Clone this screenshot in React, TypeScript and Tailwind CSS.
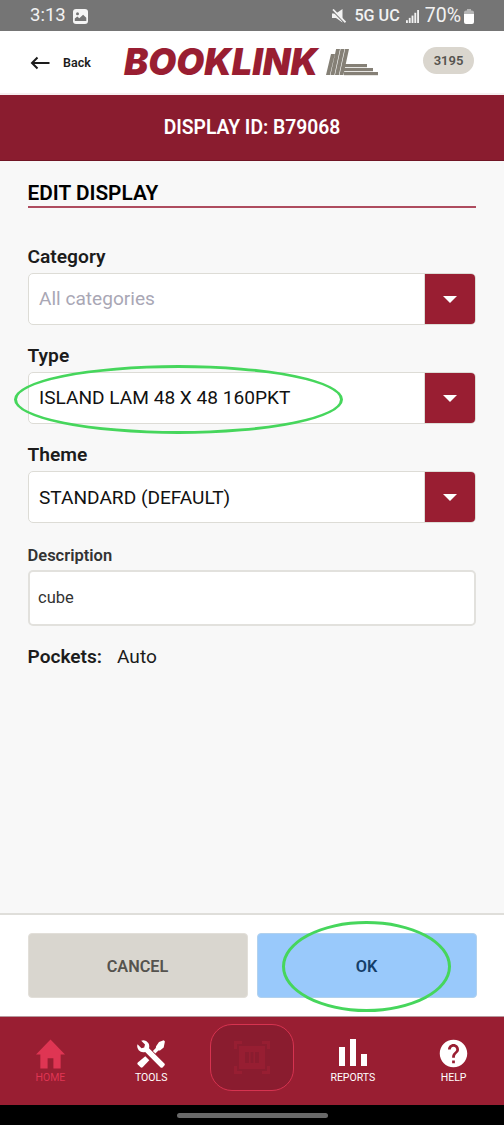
import type { ReactNode } from "react";
import { MdHelp } from "react-icons/md";

const labelClass = "text-[19.200px] leading-[22px] font-semibold text-[#1c1c1c]";

function StatusBar() {
  return (
    <div className="flex h-[31px] shrink-0 items-center justify-between bg-[#757575] pt-px pr-[30px] pl-[30px] text-[18.500px] text-[#f2f2f2]">
      <div className="flex items-center gap-[7px]">
        <span>3:13</span>
        <svg width="15" height="15" viewBox="0 0 15 15">
          <rect width="15" height="15" rx="3" fill="#f5f5f5" />
          <circle cx="4.5" cy="4.8" r="1.5" fill="#757575" />
          <path d="M1.8 12V9.5l2.5-2 2 1.7 3.8-3.4 3.2 3V12z" fill="#757575" />
        </svg>
      </div>
      <div className="flex items-center">
        <svg className="mr-[8px]" width="14" height="14" viewBox="0 0 14 14">
          <path d="M0 4.500h4L10.500 0v13.500L4 9H0z" fill="#f2f2f2" />
          <path d="M0 1.200L12.500 14" stroke="#757575" strokeWidth="1.2" />
          <path d="M1 0.500L13.500 13.300" stroke="#f2f2f2" strokeWidth="1.7" />
        </svg>
        <span className="mr-[6px] text-[16.200px] font-medium">5G UC</span>
        <svg className="mr-[6px]" width="13" height="13" viewBox="0 0 14 14" fill="#f2f2f2">
          <rect y="11" width="2" height="3" />
          <rect x="3" y="8.5" width="2" height="5.5" />
          <rect x="6" y="6" width="2" height="8" />
          <rect x="9" y="3" width="2" height="11" />
          <rect x="12" width="2" height="14" />
        </svg>
        <span className="mr-[3px] text-[19.500px]">70%</span>
        <svg width="10" height="15" viewBox="0 0 10 15">
          <path d="M3 0h4v1.500h1q2 0 2 2V5H0V3.500q0-2 2-2h1z" fill="#b5b5b5" />
          <path d="M0 5h10v8q0 2-2 2H2q-2 0-2-2z" fill="#fff" />
        </svg>
      </div>
    </div>
  );
}

function Header() {
  return (
    <header className="flex h-[64px] shrink-0 items-center border-b-2 border-[#f6eef0] bg-white pr-[30px] pl-[30px]">
      <svg className="mt-[2px]" width="21" height="14" viewBox="0 0 21 14" fill="none" stroke="#1c1c1c" strokeWidth="2">
        <path d="M19.500 7H2M7.500 1.500L2 7l5.500 5.500" />
      </svg>
      <span className="mt-[3px] ml-3 w-[60px] text-[12.500px] font-semibold text-[#1c1c1c]">Back</span>
      <svg className="overflow-visible" width="260" height="46" viewBox="0 0 260 46">
        <text
          x="1"
          y="36"
          textLength="194"
          lengthAdjust="spacingAndGlyphs"
          fontFamily="Inter"
          fontSize="37"
          fontWeight="900"
          fontStyle="italic"
          fill="#991e32"
        >
          BOOKLINK
        </text>
        <g fill="#858076">
          <path d="M203 36l5-21h3.900l-5 21zM207.500 36l5.600-26h3.900l-5.600 26zM212 36l5.600-26h3.900l-5.600 26zM216.500 36l5.600-26h3.900l-5.600 26z" />
          <rect x="221" y="25" width="23" height="3.200" />
          <rect x="221" y="29" width="29" height="3.200" />
          <rect x="221" y="33" width="34" height="3.200" />
        </g>
      </svg>
      <span className="-mt-[3px] ml-auto flex h-[27px] w-[51px] shrink-0 items-center justify-center rounded-full bg-[#dad6ce] text-[13px] font-semibold text-[#55534e]">
        3195
      </span>
    </header>
  );
}

function SelectField({ label, value, muted }: { label: string; value: string; muted?: boolean }) {
  return (
    <div className="mb-[20.200px]">
      <div className={labelClass}>{label}</div>
      <div className="mt-[5px] flex h-[52px] overflow-hidden rounded-[5px] border border-[#dddcd6] bg-white">
        <div
          className={`flex flex-1 items-center pt-px pl-[10.500px] text-[19.100px] ${muted ? "text-[#a9a7b5]" : "text-[#111]"}`}
        >
          {value}
        </div>
        <div className="flex w-[51px] items-center justify-center border-l border-[#dddcd6] bg-[#991e32]">
          <svg width="14" height="7" viewBox="0 0 14 7" fill="#fff">
            <path d="M0 0h14L7 7z" />
          </svg>
        </div>
      </div>
    </div>
  );
}

function NavItem({ label, active, children }: { label: string; active?: boolean; children: ReactNode }) {
  return (
    <div
      className={`flex w-[101px] flex-col items-center pt-[19px] text-[10.500px] leading-[14px] ${active ? "text-[#df3553]" : "text-[#fff]"}`}
    >
      <div className="flex h-[35px] items-center justify-center">{children}</div>
      <span>{label}</span>
    </div>
  );
}

function BottomNav() {
  return (
    <nav className="flex h-[89px] shrink-0 border-t border-[#b7999e] bg-[#991e32]">
      <NavItem label="HOME" active>
        <svg width="29" height="30" viewBox="0 0 30 30" fill="currentColor">
          <path d="M15 0L0 15.500h4.500V30H12V19.500h6V30h7.500V15.500H30z" />
        </svg>
      </NavItem>
      <NavItem label="TOOLS">
        <svg width="28" height="28" viewBox="0 0 28 28" fill="currentColor">
          <path d="M4.200.800Q8.500-.800 11.300 3q1.500 2.300.700 5.200L27.400 23.600q.900 1 0 2l-1.800 1.800q-1 .900-2 0L8.200 12q-4 1-6.500-1.800Q-.500 7.500.500 4.200l4 4 2.700-.700.800-3z" />
          <path d="M8.300 16.300l4 4-6.700 6.900q-1 .900-2 0L.800 24.400q-.900-1 0-2z" />
          <path d="M27.300.700q.900.800.400 1.900l-1 4.900-3.700 2.900-1.600.200-3 2.900-2.500-2.500 2.900-3 .300-1.700L22 2.100l4-1.700q.800-.200 1.300.300z" />
        </svg>
      </NavItem>
      <div className="w-[101px] pt-[7px]">
        <div className="mx-auto flex h-[67px] w-[84px] items-center justify-center rounded-[22px] border border-[#d63350] bg-[#8a1c2f]">
          <svg width="36" height="33" viewBox="0 0 36 33" fill="#971e32">
            <path d="M0 0h8v3H3v5H0zM28 0h8v8h-3V3h-5zM0 25h3v5h5v3H0zM33 25h3v8h-8v-3h5z" />
            <path fillRule="evenodd" d="M5 5h26v23H5zM11 11v11h4V11zM16.500 11v11h3V11zM21 11v11h4V11z" />
          </svg>
        </div>
      </div>
      <NavItem label="REPORTS">
        <svg className="-mt-[2px]" width="28" height="27" viewBox="0 0 28 27" fill="currentColor">
          <path d="M0 8h6v19H0zM11 0h6v27h-6zM22 15h6v12h-6z" />
        </svg>
      </NavItem>
      <NavItem label="HELP">
        <MdHelp size={33} />
      </NavItem>
    </nav>
  );
}

function App() {
  return (
    <div className="relative flex h-[1125px] w-[504px] flex-col overflow-hidden bg-[#f8f8f8] font-[Roboto,sans-serif]">
      <StatusBar />
      <Header />
      <div className="flex h-[66px] shrink-0 items-center justify-center border-b border-[#711525] bg-[#8a1c2f] pt-px text-[19.300px] font-semibold text-white">
        DISPLAY ID: B79068
      </div>
      <main className="flex-1 pt-[19px] pr-[28px] pl-[27.500px]">
        <h1 className="mb-[38px] h-[28px] border-b-2 border-[#ae4c5f] text-[20.800px] leading-[27px] font-semibold text-black">
          EDIT DISPLAY
        </h1>
        <SelectField label="Category" value="All categories" muted />
        <SelectField label="Type" value="ISLAND LAM 48 X 48 160PKT" />
        <SelectField label="Theme" value="STANDARD (DEFAULT)" />
        <div className="pt-[2px] text-[16.500px] leading-[20px] font-semibold text-[#333]">Description</div>
        <div className="mt-[4px] flex h-[56px] items-center rounded-[5px] border-2 border-[#e2e1dd] bg-white pt-[2px] pl-[8.500px] text-[16.500px] text-[#333]">
          cube
        </div>
        <div className="mt-[19px] flex gap-[15px] text-[19.100px] leading-[24px] text-[#1c1c1c]">
          <span className="font-semibold">Pockets:</span>
          <span>Auto</span>
        </div>
      </main>
      <div className="flex h-[103px] shrink-0 gap-[9px] border-t-2 border-[#dfdeda] bg-white pt-[18px] pr-[27.500px] pl-[27.500px] text-[16.300px] font-semibold">
        <div className="flex h-[65px] flex-1 items-center justify-center rounded-[4px] border border-[#e2dfd9] bg-[#d9d6cf] pt-[3px] text-[#55534e]">
          CANCEL
        </div>
        <div className="flex h-[65px] flex-1 items-center justify-center rounded-[4px] border border-[#b1d1ee] bg-[#99c9fb] pt-[3px] text-[#153e68]">
          OK
        </div>
      </div>
      <BottomNav />
      <div className="flex h-[20px] shrink-0 justify-center bg-black pt-[8px]">
        <div className="h-[5px] w-[151px] rounded-full bg-[#696969]" />
      </div>
      {/* hand-marked highlights over the type field and the OK button */}
      <div className="absolute top-[365px] left-[14px] h-[69px] w-[329px] rounded-[50%] border-3 border-[#46d65c]" />
      <div className="absolute top-[921px] left-[282px] h-[91px] w-[169px] rounded-[50%] border-3 border-[#46d65c]" />
    </div>
  );
}

export default App;
